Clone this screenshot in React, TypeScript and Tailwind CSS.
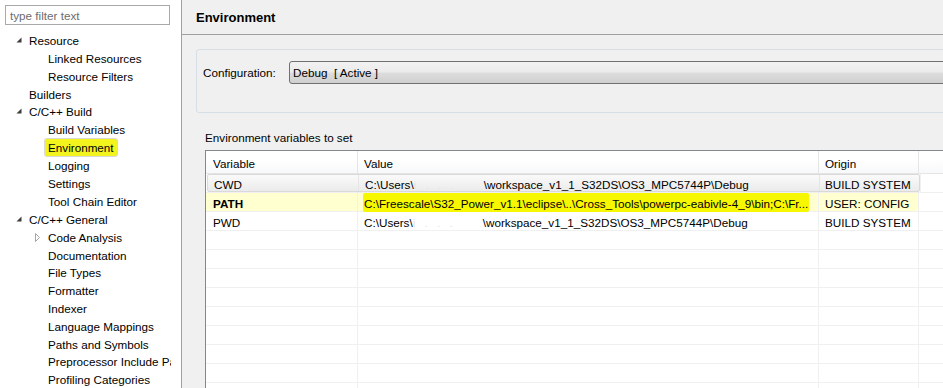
import React from 'react';

type Node = { label: string; level: 0 | 1; arrow?: 'open' | 'closed'; selected?: boolean };

const tree: Node[] = [
  { label: 'Resource', level: 0, arrow: 'open' },
  { label: 'Linked Resources', level: 1 },
  { label: 'Resource Filters', level: 1 },
  { label: 'Builders', level: 0 },
  { label: 'C/C++ Build', level: 0, arrow: 'open' },
  { label: 'Build Variables', level: 1 },
  { label: 'Environment', level: 1, selected: true },
  { label: 'Logging', level: 1 },
  { label: 'Settings', level: 1 },
  { label: 'Tool Chain Editor', level: 1 },
  { label: 'C/C++ General', level: 0, arrow: 'open' },
  { label: 'Code Analysis', level: 1, arrow: 'closed' },
  { label: 'Documentation', level: 1 },
  { label: 'File Types', level: 1 },
  { label: 'Formatter', level: 1 },
  { label: 'Indexer', level: 1 },
  { label: 'Language Mappings', level: 1 },
  { label: 'Paths and Symbols', level: 1 },
  { label: 'Preprocessor Include Paths, Macros etc.', level: 1 },
  { label: 'Profiling Categories', level: 1 },
];

const Arrow = ({ kind }: { kind?: 'open' | 'closed' }) => {
  if (kind === 'open') {
    return (
      <svg className="shrink-0" width="13" height="18" viewBox="0 0 13 18">
        <polygon points="5.5,6.5 5.5,11.5 0.5,11.5" fill="#3c3c3c" />
      </svg>
    );
  }
  if (kind === 'closed') {
    return (
      <svg className="shrink-0" width="13" height="18" viewBox="0 0 13 18">
        <polygon points="0.5,5.5 4.5,9.5 0.5,13.5" fill="none" stroke="#a6a6a6" />
      </svg>
    );
  }
  return <span className="w-[13px] shrink-0" />;
};

// redacted user name, washed out
const Blur = () => (
  <span className="inline-block w-[70px] text-[#e4e4e4] tracking-[3px]">i . .  .</span>
);

const App = () => {
  return (
    <div className="w-[943px] h-[388px] flex overflow-hidden bg-[#f0f0f0] text-[11.7px] text-black font-['Segoe_UI','Liberation_Sans',sans-serif] leading-none">
      {/* left tree */}
      <div className="w-[182px] shrink-0 bg-white border-r border-[#a0a0a0] flex flex-col overflow-hidden">
        <div className="mt-[5px] ml-[5px] w-[165px] h-[20px] border border-[#a9a9a9] flex items-center pl-[4px] pt-[1px] text-[#6d6d6d]">
          type filter text
        </div>
        <div className="mt-[6px] w-[171px] flex flex-col overflow-hidden">
          {tree.map((n) => (
            <div
              key={n.label}
              className={`h-[18px] flex items-center whitespace-nowrap ${n.level === 0 ? 'pl-[16px]' : 'pl-[35px]'}`}
            >
              <Arrow kind={n.arrow} />
              {n.selected ? (
                <span className="-ml-[4px] h-[19px] px-[3px] pt-[2px] flex items-center rounded-[3px] border border-[#d9d9d9] bg-[#f3f31e]">
                  {n.label}
                </span>
              ) : (
                <span className="pt-[2px]">{n.label}</span>
              )}
            </div>
          ))}
        </div>
      </div>

      {/* right page */}
      <div className="flex-1 min-w-0 flex flex-col">
        <div className="h-[35px] shrink-0 border-b border-[#a0a0a0] flex items-center pl-[14px] pt-[1px] font-bold text-[13px]">
          Environment
        </div>

        <div className="ml-[14px] mt-[14px] -mr-[20px] h-[64px] shrink-0 rounded-[3px] border border-[#d5dfe5] pt-[11px] pl-[6px]">
          <div className="flex items-center">
            <span className="w-[86px] pt-[1px]">Configuration:</span>
            <div className="flex-1 h-[23px] rounded-[3px] border border-[#707070] bg-[linear-gradient(#f2f2f2_0%,#ebebeb_48%,#dddddd_52%,#cfcfcf_100%)] flex items-center pl-[3px] pt-[1px] whitespace-pre">
              Debug  [ Active ]
            </div>
          </div>
        </div>

        <div className="ml-[23px] mt-[17px] h-[14px] flex items-center pt-[2px]">Environment variables to set</div>

        <div className="ml-[23px] mt-[6px] -mr-[20px] flex-1 bg-white border-l border-t border-[#828790] overflow-hidden">
          {/* header */}
          <div className="h-[23px] flex bg-[linear-gradient(#ffffff_0%,#ffffff_40%,#f7f8f9_100%)] border-b border-[#e5e5e5]">
            <div className="w-[152px] border-r border-[#e5e5e5] flex items-center pl-[7px] pt-[3px]">Variable</div>
            <div className="w-[461px] border-r border-[#e5e5e5] flex items-center pl-[6px] pt-[3px]">Value</div>
            <div className="w-[100px] border-r border-[#e5e5e5] flex items-center pl-[6px] pt-[3px]">Origin</div>
            <div className="flex-1" />
          </div>

          {/* CWD (hover) */}
          <div className="h-[19px] flex border-b border-[#f0f0f0]">
            <div className="w-[713px] flex rounded-[2px] border border-[#d9d9d9] bg-[linear-gradient(#fafafa,#ebebeb)] ml-[1px]">
              <div className="w-[151px] flex items-center pl-[6px] pt-[3px] border-r border-[#e5e5e5]">CWD</div>
              <div className="w-[461px] flex items-center pl-[6px] pt-[3px] border-r border-[#e5e5e5] whitespace-nowrap">
                C:\Users\<Blur />\workspace_v1_1_S32DS\OS3_MPC5744P\Debug
              </div>
              <div className="flex-1 flex items-center pl-[5px] pt-[3px]">BUILD SYSTEM</div>
            </div>
            <div className="flex-1 border-l border-[#f0f0f0]" />
          </div>

          {/* PATH */}
          <div className="h-[19px] flex border-b border-[#f0f0f0]">
            <div className="w-[152px] flex items-center pl-[7px] pt-[3px] border-r border-[#f0f0f0] bg-[#ffffd0] font-bold">PATH</div>
            <div className="w-[461px] flex items-center pl-[5px] border-r border-[#f0f0f0] bg-[#ffffd0] whitespace-nowrap">
              <span className="h-[19px] flex items-center px-[1px] pt-[3px] bg-[#f7f700] rounded-[2px]">
                C:\Freescale\S32_Power_v1.1\eclipse\..\Cross_Tools\powerpc-eabivle-4_9\bin;C:\Fr...
              </span>
            </div>
            <div className="w-[100px] flex items-center pl-[6px] pt-[3px] border-r border-[#f0f0f0] bg-[#ffffd0]">USER: CONFIG</div>
            <div className="flex-1" />
          </div>

          {/* PWD */}
          <div className="h-[19px] flex border-b border-[#f0f0f0]">
            <div className="w-[152px] flex items-center pl-[7px] pt-[3px] border-r border-[#f0f0f0]">PWD</div>
            <div className="w-[461px] flex items-center pl-[6px] pt-[3px] border-r border-[#f0f0f0] whitespace-nowrap">
              C:\Users\<Blur />\workspace_v1_1_S32DS\OS3_MPC5744P\Debug
            </div>
            <div className="w-[100px] flex items-center pl-[6px] pt-[3px] border-r border-[#f0f0f0]">BUILD SYSTEM</div>
            <div className="flex-1" />
          </div>

          {Array.from({ length: 9 }).map((_, i) => (
            <div key={i} className="h-[19px] flex border-b border-[#f0f0f0]">
              <div className="w-[152px] border-r border-[#f0f0f0]" />
              <div className="w-[461px] border-r border-[#f0f0f0]" />
              <div className="w-[100px] border-r border-[#f0f0f0]" />
              <div className="flex-1" />
            </div>
          ))}
        </div>
      </div>
    </div>
  );
};

export default App;
